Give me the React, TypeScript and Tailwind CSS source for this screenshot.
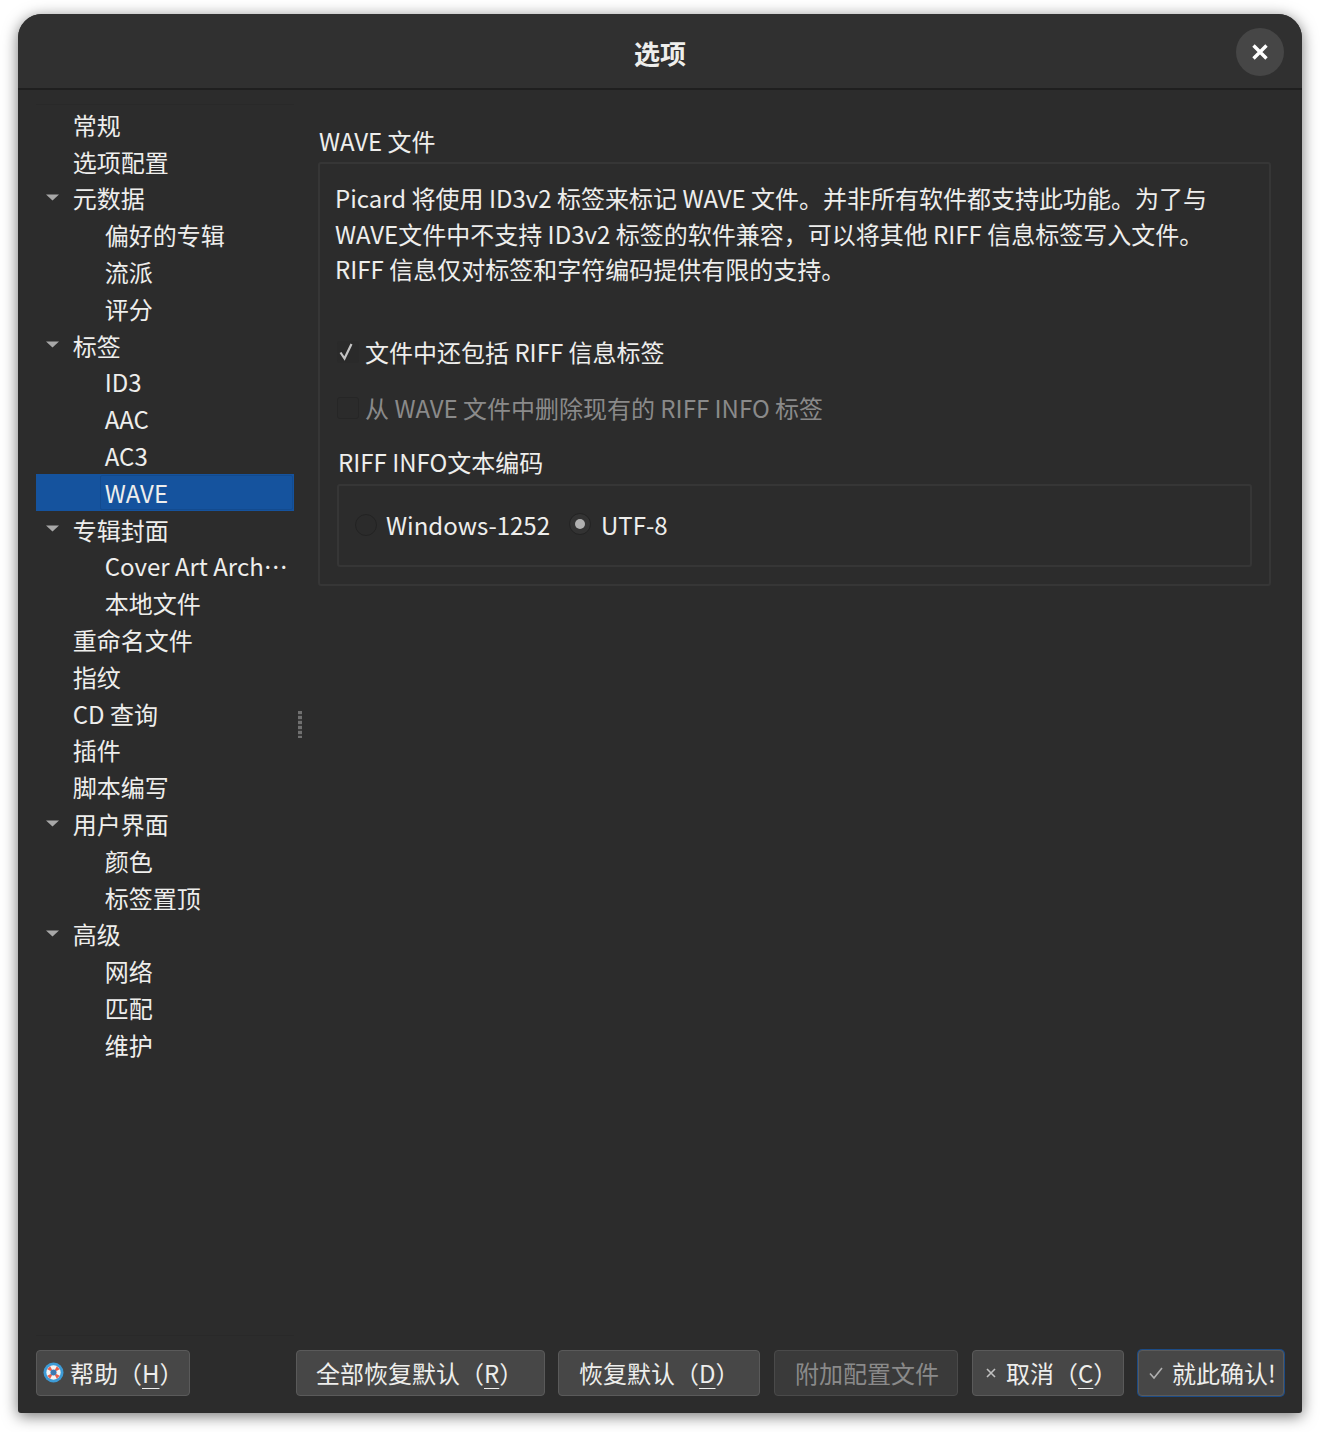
import React from "react";

type Item = { t: string; level: 0 | 1; arrow?: boolean; sel?: boolean };
const items: Item[] = [
  { t: "常规", level: 0 },
  { t: "选项配置", level: 0 },
  { t: "元数据", level: 0, arrow: true },
  { t: "偏好的专辑", level: 1 },
  { t: "流派", level: 1 },
  { t: "评分", level: 1 },
  { t: "标签", level: 0, arrow: true },
  { t: "ID3", level: 1 },
  { t: "AAC", level: 1 },
  { t: "AC3", level: 1 },
  { t: "WAVE", level: 1, sel: true },
  { t: "专辑封面", level: 0, arrow: true },
  { t: "Cover Art Arch…", level: 1 },
  { t: "本地文件", level: 1 },
  { t: "重命名文件", level: 0 },
  { t: "指纹", level: 0 },
  { t: "CD 查询", level: 0 },
  { t: "插件", level: 0 },
  { t: "脚本编写", level: 0 },
  { t: "用户界面", level: 0, arrow: true },
  { t: "颜色", level: 1 },
  { t: "标签置顶", level: 1 },
  { t: "高级", level: 0, arrow: true },
  { t: "网络", level: 1 },
  { t: "匹配", level: 1 },
  { t: "维护", level: 1 },
];

function Row({ item }: { item: Item }) {
  return (
    <div className={"relative flex h-[36.8px] items-center whitespace-nowrap " + (item.sel ? "bg-[#15539e]" : "")}>
      {item.sel && <div className="absolute inset-y-px left-[64px] right-px rounded-[2px] border border-[#134b8f]" />}
      {item.arrow && (
        <svg className="absolute left-[10px] top-[14px]" width="13" height="7" viewBox="0 0 13 7">
          <path d="M0 0.5H13L6.5 6.5Z" fill="#a8a8a8" />
        </svg>
      )}
      <span className={"relative " + (item.level === 0 ? "ml-[36.8px]" : "ml-[68.8px]")}>{item.t}</span>
    </div>
  );
}

function Btn({ className, children, disabled }: { className: string; children: React.ReactNode; disabled?: boolean }) {
  return (
    <div
      className={
        "flex h-[46px] shrink-0 items-center whitespace-nowrap rounded-[4px] border " +
        (disabled
          ? "border-[#4a4a4a] bg-[#3a3a3a] text-[#8a8a8a] "
          : "border-[#5a5a5a] bg-[#474747] text-[#eeeeec] ") +
        className
      }
    >
      {children}
    </div>
  );
}

function Mn({ c }: { c: string }) {
  return <span className="underline decoration-1 underline-offset-[5px]">{c}</span>;
}

export default function App() {
  return (
    <div
      lang="zh-CN"
      className="h-[1432px] w-[1320px] overflow-hidden bg-white pl-[18px] pt-[14px] font-['Noto_Sans_CJK_SC',sans-serif] text-[24px] leading-[36px] text-[#eeeeec]"
    >
      <div className="flex h-[1399px] w-[1284px] flex-col overflow-hidden rounded-t-[24px] rounded-b-[3px] bg-[#2c2c2c] shadow-[0_3px_15px_rgba(0,0,0,0.55)]">
        <header className="relative flex h-[76px] shrink-0 items-center justify-center border-b-2 border-[#1f1f1f] bg-[#303030]">
          <span className="translate-y-[1.5px] text-[26px] font-bold">选项</span>
          <div className="absolute right-[18px] top-[14px] flex h-[48px] w-[48px] items-center justify-center rounded-full bg-[#464646]">
            <svg width="18" height="18" viewBox="0 0 18 18">
              <path d="M2.5 2.5L15.5 15.5M15.5 2.5L2.5 15.5" stroke="#ffffff" strokeWidth="3.4" />
            </svg>
          </div>
        </header>

        <div className="flex min-h-0 flex-1 pl-[18px]">
          <nav className="mt-[14px] h-[1232px] w-[258px] shrink-0 border-t border-b border-[#292929] pt-[1.4px]">
            {items.map((it) => (
              <Row key={it.t} item={it} />
            ))}
          </nav>
          <div className="flex w-[11px] shrink-0 items-start justify-center pt-[621px]">
            <div className="h-[27px] w-[4px] bg-[repeating-linear-gradient(to_bottom,#707070_0,#707070_3px,#3a3a3a_3px,#3a3a3a_5px)]" />
          </div>
          <main className="ml-[13px] flex-1 pt-[33px]">
            <div className="ml-px h-[36px]">WAVE 文件</div>
            <section className="mt-[3px] h-[424px] w-[953px] rounded-[3px] border-2 border-[#363636] pl-[15px] pt-[16px]">
              <p className="leading-[35.5px]">
                Picard 将使用 ID3v2 标签来标记 WAVE 文件。并非所有软件都支持此功能。为了与
                <br />
                WAVE文件中不支持 ID3v2 标签的软件兼容，可以将其他 RIFF 信息标签写入文件。
                <br />
                RIFF 信息仅对标签和字符编码提供有限的支持。
              </p>
              <div className="mt-[47px] flex h-[36px] items-center pl-[2px]">
                <div className="flex h-[22px] w-[22px] items-center justify-center rounded-[3px] bg-[#2a2a2a]">
                  <svg width="18" height="18" viewBox="0 0 18 18">
                    <path d="M1.5 9.5L5.5 15.5L12.5 1" fill="none" stroke="#c4c4c4" strokeWidth="2.2" />
                  </svg>
                </div>
                <span className="ml-[6px]">文件中还包括 RIFF 信息标签</span>
              </div>
              <div className="mt-[20px] flex h-[36px] items-center pl-[2px] text-[#8a8a8a]">
                <div className="h-[22px] w-[22px] rounded-[3px] border border-[#262626] bg-[#2b2b2b]" />
                <span className="ml-[6px]">从 WAVE 文件中删除现有的 RIFF INFO 标签</span>
              </div>
              <div className="mt-[18px] ml-[3px] h-[36px]">RIFF INFO文本编码</div>
              <div className="mt-[4px] ml-[2px] flex h-[83px] w-[915px] items-center rounded-[3px] border-2 border-[#363636] pl-[16px]">
                <div className="h-[22px] w-[22px] rounded-full border border-[#232323] bg-[#2b2b2b]" />
                <span className="ml-[9px]">Windows-1252</span>
                <div className="ml-[19px] flex h-[22px] w-[22px] -translate-y-[1px] items-center justify-center rounded-full border border-[#232323] bg-[#333333]">
                  <div className="h-[10px] w-[10px] rounded-full bg-[#b0b0b0]" />
                </div>
                <span className="ml-[10px]">UTF-8</span>
              </div>
            </section>
          </main>
        </div>

        <footer className="flex h-[63px] shrink-0 items-start pl-[18px]">
          <Btn className="w-[154px] pl-[6px]">
            <svg width="21" height="21" viewBox="0 0 22 22" className="mr-[6px] -translate-y-px">
              <circle cx="11" cy="11" r="10.5" fill="#3d9bd6" />
              <circle cx="11" cy="11" r="7.5" fill="#f4f4f4" />
              <path d="M7.5 4.5L9.5 8L8 9.5L4.5 7.5ZM14.5 4.5L17.5 7.5L14 9.5L12.5 8ZM4.5 14.5L8 12.5L9.5 14L7.5 17.5ZM17.5 14.5L14.5 17.5L12.5 14L14 12.5Z" fill="#e8604c" />
              <circle cx="11" cy="11" r="3.2" fill="#3d78b0" />
            </svg>
            帮助（<Mn c="H" />）
          </Btn>
          <Btn className="ml-[106px] w-[249px] pl-[19px]">
            全部恢复默认（<Mn c="R" />）
          </Btn>
          <Btn className="ml-[13px] w-[202px] pl-[20px]">
            恢复默认（<Mn c="D" />）
          </Btn>
          <Btn disabled className="ml-[14px] w-[184px] pl-[20px]">
            附加配置文件
          </Btn>
          <Btn className="ml-[14px] w-[152px] pl-[12px]">
            <svg width="12" height="12" viewBox="0 0 12 12" className="mr-[9px]">
              <path d="M2 2L10 10M10 2L2 10" stroke="#c0c0c0" strokeWidth="1.6" />
            </svg>
            取消（<Mn c="C" />）
          </Btn>
          <Btn className="ml-[14px] w-[146px] border-[#1c4b85] bg-[#414650] pl-[9px] shadow-[0_0_0_1px_#1c4b85]">
            <svg width="16" height="14" viewBox="0 0 16 14" className="mr-[8px]">
              <path d="M2 7.5L6 12L14 2" fill="none" stroke="#b0b0b0" strokeWidth="1.6" />
            </svg>
            就此确认!
          </Btn>
        </footer>
      </div>
    </div>
  );
}
